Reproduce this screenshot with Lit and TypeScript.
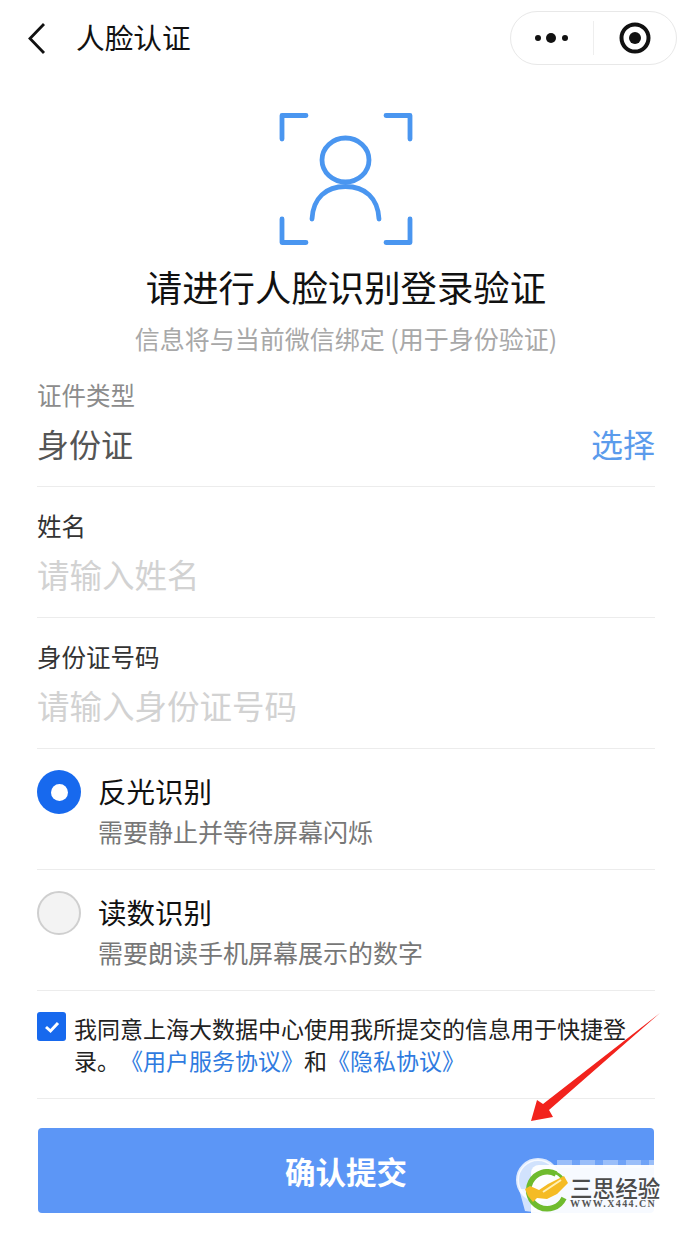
import { LitElement, html, css } from "lit";
import { customElement } from "lit/decorators.js";

@customElement("app-root")
export class AppRoot extends LitElement {
  static styles = css`
    :host { display: block; width: 692px; height: 1244px; position: relative; overflow: hidden; background: #fff; font-family: "Noto Sans CJK SC", "Noto Sans", sans-serif; color: #111; }
    * { box-sizing: border-box; }
    .nav { height: 76px; display: flex; align-items: center; padding: 0 15px 0 27px; }
    .back { width: 20px; height: 34px; margin-right: 29px; flex: none; }
    .navtitle { font-size: 28.7px; line-height: 40px; flex: 1; color: #111; margin-top: -3px; }
    .capsule { width: 167px; height: 54px; border: 1px solid #e8e8e8; border-radius: 27px; display: flex; align-items: center; background: #fff; }
    .capsule .l { width: 82px; display: flex; justify-content: center; }
    .capsule .sep { width: 1px; height: 34px; background: #eee; }
    .capsule .r { flex: 1; display: flex; justify-content: center; }
    .hero { display: flex; flex-direction: column; align-items: center; padding-top: 36px; }
    .hero svg { display: block; }
    .h1 { font-size: 36.4px; line-height: 50px; margin-top: 15px; color: #111; font-weight: 400; }
    .sub { font-size: 25px; line-height: 34px; margin-top: 10px; color: #a8a8a8; }
    .form { padding: 0 37px; }
    .field { border-bottom: 1px solid #ececec; }
    .f1 { height: 130px; padding-top: 21px; margin-top: 1px; }
    .f1.first { height: 121px; padding-top: 12px; margin-top: 11px; }
    .lab { font-size: 24.5px; line-height: 34px; color: #333; }
    .lab.dim { color: #8c8c8c; }
    .val { display: flex; justify-content: space-between; font-size: 32px; line-height: 46px; margin-top: 8px; color: #555; }
    .val .pick { color: #5b9bec; }
    .ph { font-size: 32.5px; line-height: 46px; margin-top: 8px; color: #d2d2d2; }
    .opt { height: 121px; display: flex; padding-top: 21px; border-bottom: 1px solid #ececec; }
    .radio { width: 44px; height: 44px; border-radius: 50%; flex: none; margin-right: 17px; }
    .radio.on { background: #1769ee; display: flex; align-items: center; justify-content: center; }
    .radio.on::after { content: ""; width: 17px; height: 17px; border-radius: 50%; background: #fff; }
    .radio.off { background: #f3f3f3; border: 2px solid #cfcfcf; }
    .t1 { font-size: 28.5px; line-height: 40px; color: #111; margin-top: 1px; }
    .t2 { font-size: 25px; line-height: 36px; color: #777; margin-top: 2px; }
    .agree { height: 108px; display: flex; padding-top: 21px; border-bottom: 1px solid #ececec; }
    .check { width: 29px; height: 29px; border-radius: 3px; background: #1769ee; flex: none; margin-right: 8px; display: flex; align-items: center; justify-content: center; }
    .agree p { margin: 0 -4px 0 0; font-size: 23px; line-height: 32px; color: #222; text-spacing-trim: space-all; white-space: nowrap; }
    .link { color: #2f7be0; }
    .btn { margin: 29px 1px 0; height: 85px; border-radius: 4px; background: #5c96f6; color: #fff; display: flex; align-items: center; justify-content: center; font-size: 30.5px; font-weight: 700; }
    .arrow { position: absolute; left: 525px; top: 1005px; width: 140px; height: 125px; }
    .wm { position: absolute; left: 505px; top: 1145px; width: 187px; height: 99px; }
    .wm .ring { position: absolute; left: 0; top: 0; }
    .wm .ghost { position: absolute; left: 52px; top: 15px; width: 110px; height: 8px; background: repeating-linear-gradient(90deg, rgba(255,255,255,.38) 0 15px, rgba(255,255,255,.12) 15px 23px); }
    .wm .veil { position: absolute; left: 26px; top: 20px; width: 136px; height: 62px; background: rgba(255,255,255,.95); border-radius: 8px; }
    .wm .logo { position: absolute; left: 18px; top: 24px; }
    .wm .cn { position: absolute; left: 65px; top: 31px; font-size: 22.5px; line-height: 22px; color: #4b4b4b; white-space: nowrap; font-weight: 500; letter-spacing: 0.1px; }
    .wm .en { position: absolute; left: 65px; top: 53px; font-family: "Liberation Serif", serif; font-size: 10px; line-height: 12px; font-weight: 700; color: #555; letter-spacing: 1.4px; white-space: nowrap; }
  `;

  render() {
    return html`
      <div class="nav">
        <svg class="back" viewBox="0 0 20 34"><path d="M17 3 L3 17.500 L17 32" fill="none" stroke="#111" stroke-width="2.800"/></svg>
        <div class="navtitle">人脸认证</div>
        <div class="capsule">
          <div class="l">
            <svg width="36" height="12" viewBox="0 0 36 12"><circle cx="4" cy="6" r="3" fill="#111"/><circle cx="17" cy="6" r="5" fill="#111"/><circle cx="31" cy="6" r="3" fill="#111"/></svg>
          </div>
          <div class="sep"></div>
          <div class="r">
            <svg width="32" height="32" viewBox="0 0 32 32"><circle cx="16" cy="16" r="13.500" fill="none" stroke="#111" stroke-width="4"/><circle cx="16" cy="16" r="6" fill="#111"/></svg>
          </div>
        </div>
      </div>

      <div class="hero">
        <svg width="134" height="134" viewBox="0 0 134 134" fill="none" stroke="#4a96f0" stroke-width="4.800" stroke-linecap="round" stroke-linejoin="round">
          <path d="M3 27 V3.500 H27"/>
          <path d="M107 3.500 H131 V27"/>
          <path d="M3 107 V130.500 H27"/>
          <path d="M107 130.500 H131 V107"/>
          <ellipse cx="66.500" cy="48" rx="23.500" ry="22"/>
          <path d="M33 107 C34 86 47 74.500 66.500 74.500 C86 74.500 99 86 100 107"/>
        </svg>
        <div class="h1">请进行人脸识别登录验证</div>
        <div class="sub">信息将与当前微信绑定 (用于身份验证)</div>
      </div>

      <div class="form">
        <div class="field f1 first">
          <div class="lab dim">证件类型</div>
          <div class="val"><span>身份证</span><span class="pick">选择</span></div>
        </div>
        <div class="field f1">
          <div class="lab">姓名</div>
          <div class="ph">请输入姓名</div>
        </div>
        <div class="field f1">
          <div class="lab">身份证号码</div>
          <div class="ph">请输入身份证号码</div>
        </div>
        <div class="opt">
          <div class="radio on"></div>
          <div><div class="t1">反光识别</div><div class="t2">需要静止并等待屏幕闪烁</div></div>
        </div>
        <div class="opt">
          <div class="radio off"></div>
          <div><div class="t1">读数识别</div><div class="t2">需要朗读手机屏幕展示的数字</div></div>
        </div>
        <div class="agree">
          <div class="check">
            <svg width="18" height="14" viewBox="0 0 18 14"><path d="M3 7 L7.500 11 L15 3" fill="none" stroke="#fff" stroke-width="3"/></svg>
          </div>
          <p><span>我同意上海大数据中心使用我所提交的信息用于快捷登</span><br><span>录。</span><span class="link">《用户服务协议》</span><span>和</span><span class="link">《隐私协议》</span></p>
        </div>
        <div class="btn">确认提交</div>
      </div>

      <svg class="arrow" viewBox="0 0 140 125"><path d="M135 8 L18 99 L12 95 L6 116 L28 112 L24 105 Z" fill="#f2231d"/></svg>

      <div class="wm">
        <svg class="ring" width="60" height="70" viewBox="0 0 60 70"><circle cx="33" cy="35" r="20.500" fill="#fff" fill-opacity=".72" stroke="#fff" stroke-opacity=".8" stroke-width="3"/><path d="M14 44 L20 66 L36 68 L36 44 Z" fill="#fff" fill-opacity=".72"/></svg>
        <div class="ghost"></div>
        <div class="veil"></div>
        <svg class="logo" width="50" height="48" viewBox="0 0 50 48">
          <path d="M33 5 A18.500 18.500 0 1 0 41 29" fill="none" stroke="#6fbb2e" stroke-width="5.500"/>
          <path d="M33 4 C37 6 39 8 40 11" fill="none" stroke="#6fbb2e" stroke-width="3"/>
          <path d="M2 20 L7 17 L16 21 L25 15 L41 7 L45 14 L34 25 L24 30 L14 29 L10 33 L5 27 Z" fill="#f5bb24"/>
          <path d="M20 23 L38 11" stroke="#fff1b8" stroke-width="2"/>
        </svg>
        <div class="cn">三思经验</div>
        <div class="en">WWW.X444.CN</div>
      </div>
    `;
  }
}
